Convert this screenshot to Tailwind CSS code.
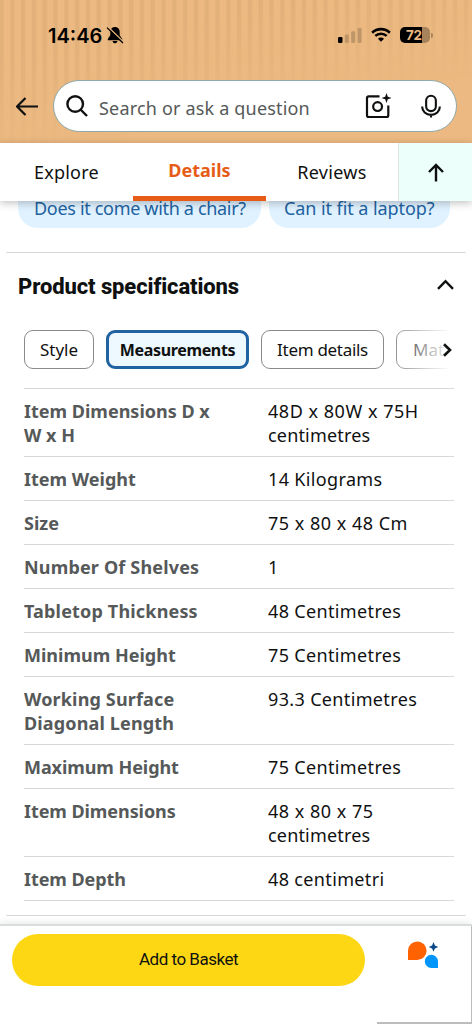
<!DOCTYPE html>
<html lang="en">
<head>
<meta charset="utf-8">
<title>Product specifications</title>
<script src="https://cdn.jsdelivr.net/npm/@tailwindcss/browser@4"></script>
</head>
<body class="w-[472px] h-[1024px] overflow-hidden bg-white text-[#0f1111] font-['Noto_Sans',sans-serif]">
<div class="flex h-[1024px] flex-col overflow-hidden whitespace-nowrap">
  <header class="relative h-[143px] shrink-0 bg-[#ebb981]">
    <div class="absolute inset-0 bg-[repeating-linear-gradient(90deg,#e2b07a_0px,#e2b07a_3px,#ebb981_4.5px,#ebb981_9.5px,#e2b07a_10.8px)] mask-[linear-gradient(170deg,black_25%,transparent_70%)]"></div>
    <div class="relative flex h-[80px] items-center pl-[48px]">
      <span class="-mt-2 w-[56px] font-['Inter',sans-serif] text-[20px] font-semibold leading-6 text-black">14:46</span>
      <svg class="-mt-2.5 ml-[2px]" width="18" height="18" viewBox="0 0 18 18"><path d="M9 1C6 1 4.300 3.200 4.300 6.200v3L1.800 13v1.200h14.400V13l-2.500-3.800v-3C13.700 3.200 12 1 9 1zM6.500 15h5c-.3 1.600-1.300 2.300-2.500 2.300s-2.200-.7-2.500-2.300z"/><path d="M1.800 .7l15.500 15" stroke="#e9b67e" stroke-width="1.600"/><path d="M1 1.600l16 15.400" stroke="#000" stroke-width="1.300"/></svg>
      <svg class="-mt-2.5 ml-[214px]" width="25" height="18" viewBox="0 0 25 18"><rect x="0" y="11" width="4.500" height="6" rx="1.200"/><g fill="#bf9668"><rect x="6.800" y="8.500" width="4" height="8.500" rx="1.200"/><rect x="13.200" y="5.300" width="4" height="11.700" rx="1.200"/><rect x="19.600" y="2" width="4" height="15" rx="1.200"/></g></svg>
      <svg class="-mt-2.5 ml-[8px]" width="20" height="16" viewBox="0 0 21 16" fill="none" stroke="#000"><path d="M1.200 5.600c5.200-5 13.400-5 18.600 0" stroke-width="2.700"/><path d="M4.500 9c3.300-3.200 8.700-3.200 12 0" stroke-width="2.600"/><path d="M7.300 11.900c1.800-1.600 4.600-1.600 6.400 0L10.500 15z" fill="#000" stroke="none"/></svg>
      <div class="-mt-2.5 ml-[9px] flex h-[16px] w-[30px] items-center rounded-[5px] bg-[linear-gradient(90deg,#000_22px,#a6835b_22px)] pl-[6px] font-['Inter',sans-serif] text-[13.5px] font-bold leading-4 tracking-[-0.3px] text-[#ebb981]">72</div>
      <div class="-mt-2.5 ml-px h-[5px] w-[2px] rounded-r bg-[#a6835b]"></div>
    </div>
    <div class="relative flex items-center pl-[15px]">
      <svg width="24" height="20" viewBox="0 0 24 20" fill="none" stroke="#0f1111" stroke-width="2.200"><path d="M10.500 2L2 10.500l8.500 8.500M1.500 10.500H23" stroke-linejoin="round"/></svg>
      <div class="ml-[14px] flex h-[52px] w-[404px] items-center rounded-full border border-[#8fa9aa] bg-white pl-[12px]">
        <svg width="22" height="22" viewBox="0 0 22 22" fill="none" stroke="#0f1111" stroke-width="2.400"><circle cx="9.200" cy="9" r="7.800"/><path d="M14.500 14.500L21 21"/></svg>
        <span class="ml-[11px] w-[266px] pt-[3px] text-[18px] leading-6 tracking-[0.18px] text-[#565959]">Search or ask a question</span>
        <svg class="mt-[-1px]" width="26" height="26" viewBox="0 0 26 26" fill="none" stroke="#0f1111" stroke-width="2.200"><path d="M14.500 3.300H3.800A1.800 1.800 0 0 0 2 5.100V22.200A1.800 1.800 0 0 0 3.800 24H21.500A1.800 1.800 0 0 0 23.300 22.200V12.500"/><circle cx="12.600" cy="13.600" r="4.400"/><path d="M21.500 0l1.300 3.700L26.500 5l-3.700 1.300-1.300 3.700-1.300-3.700L16.500 5l3.700-1.300z" fill="#0f1111" stroke="none"/></svg>
        <svg class="ml-[30px]" width="20" height="24" viewBox="0 0 21 24" fill="none" stroke="#0f1111" stroke-width="2.200"><rect x="5.400" y="1.200" width="10.200" height="16.200" rx="5.100"/><path d="M1.200 12.500c0 5.200 4 8.800 9.300 8.800s9.300-3.600 9.300-8.800M10.500 21.300V24"/></svg>
      </div>
    </div>
  </header>

  <nav class="relative z-10 flex h-[58px] shrink-0 bg-white text-[18px] leading-6 shadow-[0_2px_8px_rgba(0,0,0,0.25)]">
    <div class="flex w-[133px] items-center pl-[34px]"><span class="tracking-[0.2px]">Explore</span></div>
    <div class="flex w-[133px] items-center justify-center border-b-[5px] border-[#e65c17] font-bold text-[#e65c17]"><span>Details</span></div>
    <div class="flex w-[133px] items-center justify-center border-r border-[#dfe3e3]"><span class="tracking-[0.3px]">Reviews</span></div>
    <div class="flex flex-1 items-center justify-center bg-[#edfffa]">
      <svg width="16" height="19" viewBox="0 0 16 19" fill="none" stroke="#0f1111" stroke-width="2.400"><path d="M8 18.500V2.500M1 9l7-7 7 7"/></svg>
    </div>
  </nav>

  <div class="flex h-[27px] shrink-0 gap-2 pl-[18px] text-[18px] leading-6 text-[#2162a1]">
    <div class="h-[27px] w-[243px] rounded-b-[20px] bg-[#e0f2ff] pl-4"><div class="-mt-[5px] tracking-[-0.32px]">Does it come with a chair?</div></div>
    <div class="h-[27px] w-[181px] rounded-b-[20px] bg-[#e0f2ff] pl-[15px]"><div class="-mt-[5px] tracking-[-0.07px]">Can it fit a laptop?</div></div>
  </div>

  <main class="mx-[6px] mt-[24px] h-[664px] shrink-0 border-y border-[#d5d9d9]">
    <div class="flex h-[77px] items-center justify-between pr-[12px] pl-[12px]">
      <h2 class="-mt-[10px] font-['Roboto',sans-serif] text-[22px] leading-7 font-extrabold tracking-[-0.1px]">Product specifications</h2>
      <svg class="-mt-[15px]" width="17" height="11" viewBox="0 0 17 11" fill="none" stroke="#0f1111" stroke-width="2.400"><path d="M1 9.800L8.500 2.200 16 9.800"/></svg>
    </div>
    <div class="relative ml-[18px] flex w-[430px] gap-3 overflow-hidden text-[17px] leading-6">
      <div class="flex h-[39px] w-[70px] shrink-0 items-center justify-center rounded-[9px] border border-[#888c8c]">Style</div>
      <div class="flex h-[39px] w-[143px] shrink-0 items-center justify-center rounded-[9px] border-[3px] border-[#2162a1] bg-[#edf8ff] text-[16px] font-bold tracking-[-0.35px]">Measurements</div>
      <div class="flex h-[39px] w-[123px] shrink-0 items-center justify-center rounded-[9px] border border-[#888c8c] tracking-[-0.3px]">Item details</div>
      <div class="flex h-[39px] w-[100px] shrink-0 items-center rounded-[9px] border border-[#888c8c] pl-4">Mat</div>
      <div class="absolute top-0 right-0 flex h-[39px] w-[58px] items-center justify-end bg-[linear-gradient(90deg,rgba(255,255,255,0.1),rgba(255,255,255,0.7)_60%,#fff_95%)] pr-[2px]">
        <svg width="9" height="14" viewBox="0 0 9 14" fill="none" stroke="#0f1111" stroke-width="2.600"><path d="M1 1.200L7 7l-6 5.800"/></svg>
      </div>
    </div>
    <dl class="mt-[19px] ml-[18px] w-[430px] border-b border-[#d5d9d9] text-[18px] leading-6 *:flex *:border-t *:border-[#d5d9d9] *:pt-2.5 *:pb-[9px] [&_dd]:tracking-[0.35px] [&_dt]:w-[244px] [&_dt]:font-bold [&_dt]:text-[#565959]">
      <div><dt>Item Dimensions D x<br>W x H</dt><dd><span class="tracking-[0.53px]">48D x 80W x 75H</span><br><span class="tracking-[0.17px]">centimetres</span></dd></div>
      <div><dt>Item Weight</dt><dd>14 Kilograms</dd></div>
      <div><dt>Size</dt><dd class="tracking-[0.5px]!">75 x 80 x 48 Cm</dd></div>
      <div><dt class="tracking-[0.17px]">Number Of Shelves</dt><dd>1</dd></div>
      <div><dt class="tracking-[0.17px]">Tabletop Thickness</dt><dd>48 Centimetres</dd></div>
      <div><dt>Minimum Height</dt><dd>75 Centimetres</dd></div>
      <div><dt class="tracking-[0.15px]">Working Surface<br>Diagonal Length</dt><dd>93.3 Centimetres</dd></div>
      <div><dt class="tracking-[-0.07px]">Maximum Height</dt><dd>75 Centimetres</dd></div>
      <div><dt class="tracking-[-0.07px]">Item Dimensions</dt><dd><span class="tracking-[0.5px]">48 x 80 x 75</span><br><span class="tracking-[0.17px]">centimetres</span></dd></div>
      <div><dt class="tracking-[-0.07px]">Item Depth</dt><dd>48 centimetri</dd></div>
    </dl>
  </main>

  <footer class="relative mt-[8px] flex h-[100px] shrink-0 items-start border-t-2 border-[#d9dddd] bg-white pl-3 shadow-[0_-2px_6px_rgba(0,0,0,0.08)]">
    <button class="mt-[8px] flex h-[52px] w-[353px] items-center justify-center rounded-full bg-[#fed714] font-['Roboto',sans-serif] text-[17px] tracking-[-0.5px]">Add to Basket</button>
    <div class="ml-3 flex h-[98px] w-[95px] border-r border-b-2 border-[#bcbebe] pt-[14px] pl-[30px]">
      <svg width="32" height="28" viewBox="0 0 32 28"><path d="M1 20V10.500A9.300 9.300 0 1 1 10.300 20z" fill="#ff6200"/><path d="M31 28V21.300A6.600 6.600 0 1 0 24.400 28z" fill="#0095fa"/><path d="M26.500 2l1.400 3.400L31.300 7l-3.400 1.400-1.400 3.400-1.400-3.400L21.700 7l3.400-1.600z" fill="#0b4a86"/></svg>
    </div>
  </footer>
</div>
</body>
</html>
